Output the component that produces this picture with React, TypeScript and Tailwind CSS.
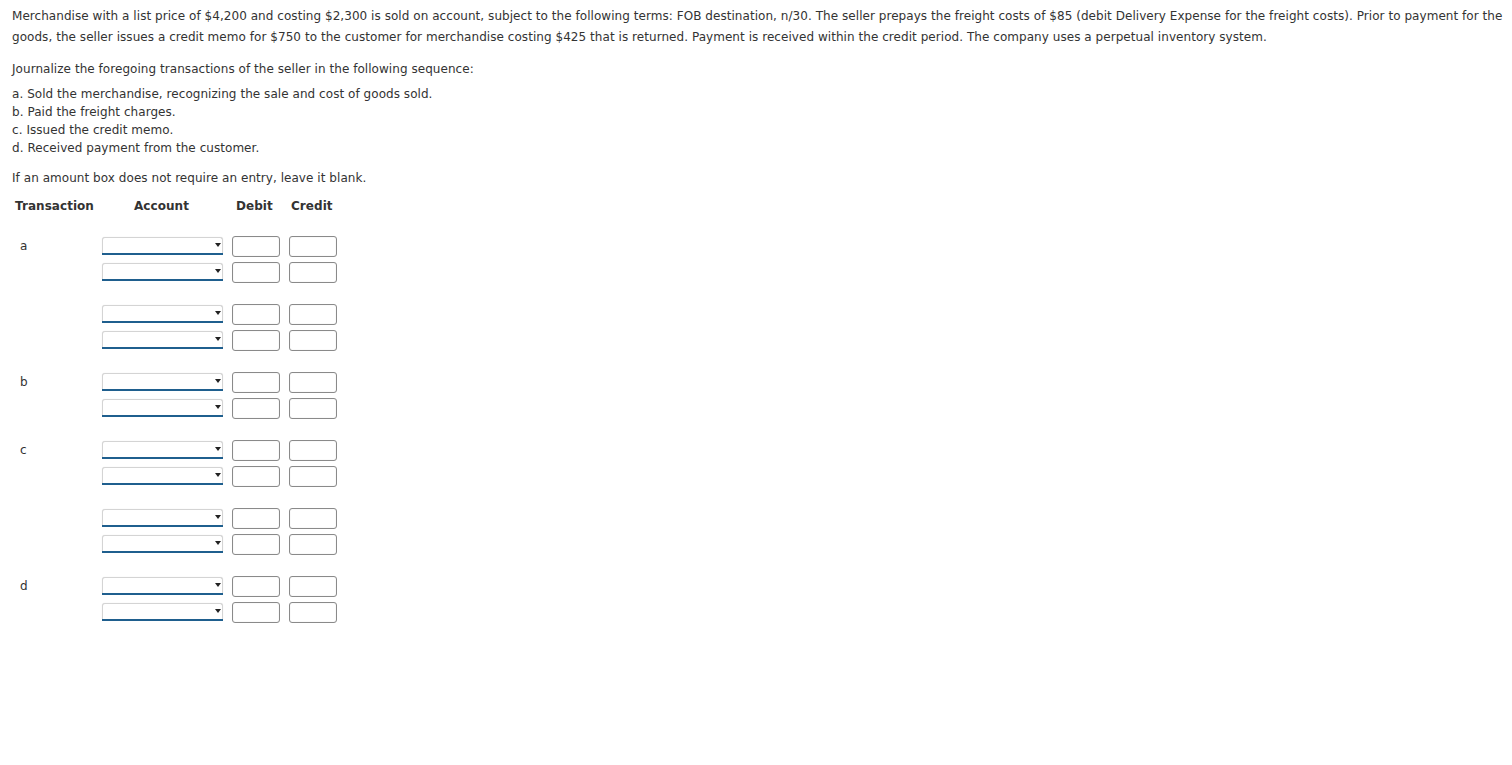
import React from 'react';

type Group = { label: string; subgroups: number };

const groups: Group[] = [
  { label: 'a', subgroups: 2 },
  { label: 'b', subgroups: 1 },
  { label: 'c', subgroups: 2 },
  { label: 'd', subgroups: 1 },
];

function AccountSelect() {
  return (
    <div className="relative mt-[1px] h-[16px] w-[121px] rounded-t-[3px] border border-b-0 border-[#d4d4d4] bg-white shadow-[0_0_1px_rgba(0,0,0,0.15)]">
      <div className="absolute bottom-[-2px] left-[-1px] right-[-1px] h-[2px] bg-[#1f5f8e]" />
      <div className="absolute right-[1px] top-[5px] h-0 w-0 border-x-[3px] border-t-[4px] border-x-transparent border-t-[#222]" />
    </div>
  );
}

function AmountInput() {
  return (
    <div className="h-[21px] w-[48px] rounded-[3px] border border-[#8a8a8a] bg-white shadow-[inset_0_0_1px_rgba(0,0,0,0.2)]" />
  );
}

function EntryRow() {
  return (
    <div className="flex items-start">
      <AccountSelect />
      <div className="ml-[9px]">
        <AmountInput />
      </div>
      <div className="ml-[9px]">
        <AmountInput />
      </div>
    </div>
  );
}

export default function App() {
  return (
    <div
      className="min-h-screen bg-white px-[12px] pt-[6px] text-[12px] tracking-[0.05px] text-[#333]"
      style={{ fontFamily: '"DejaVu Sans", Verdana, sans-serif' }}
    >
      {/* problem text */}
      <p className="leading-[21px] whitespace-nowrap">
        Merchandise with a list price of $4,200 and costing $2,300 is sold on account, subject to the following terms: FOB destination, n/30. The seller prepays the freight costs of $85 (debit Delivery Expense for the freight costs). Prior to payment for the
        <br />
        goods, the seller issues a credit memo for $750 to the customer for merchandise costing $425 that is returned. Payment is received within the credit period. The company uses a perpetual inventory system.
      </p>

      <p className="mt-[12px] leading-[18px]">Journalize the foregoing transactions of the seller in the following sequence:</p>

      <div className="mt-[7px] leading-[18px]">
        <div>a. Sold the merchandise, recognizing the sale and cost of goods sold.</div>
        <div>b. Paid the freight charges.</div>
        <div>c. Issued the credit memo.</div>
        <div>d. Received payment from the customer.</div>
      </div>

      <p className="mt-[12px] leading-[18px]">If an amount box does not require an entry, leave it blank.</p>

      {/* table header */}
      <div className="mt-[10px] flex font-bold leading-[18px]">
        <div className="w-[122px] pl-[3px]">Transaction</div>
        <div className="w-[102px]">Account</div>
        <div className="w-[55px]">Debit</div>
        <div>Credit</div>
      </div>

      {/* journal rows */}
      <div className="mt-[21px] flex flex-col gap-[21px]">
        {groups.map((g) => (
          <div key={g.label} className="flex">
            <div className="w-[90px] pl-[8px] leading-[21px]">{g.label}</div>
            <div className="flex flex-col gap-[21px]">
              {Array.from({ length: g.subgroups }).map((_, i) => (
                <div key={i} className="flex flex-col gap-[5px]">
                  <EntryRow />
                  <EntryRow />
                </div>
              ))}
            </div>
          </div>
        ))}
      </div>
    </div>
  );
}
